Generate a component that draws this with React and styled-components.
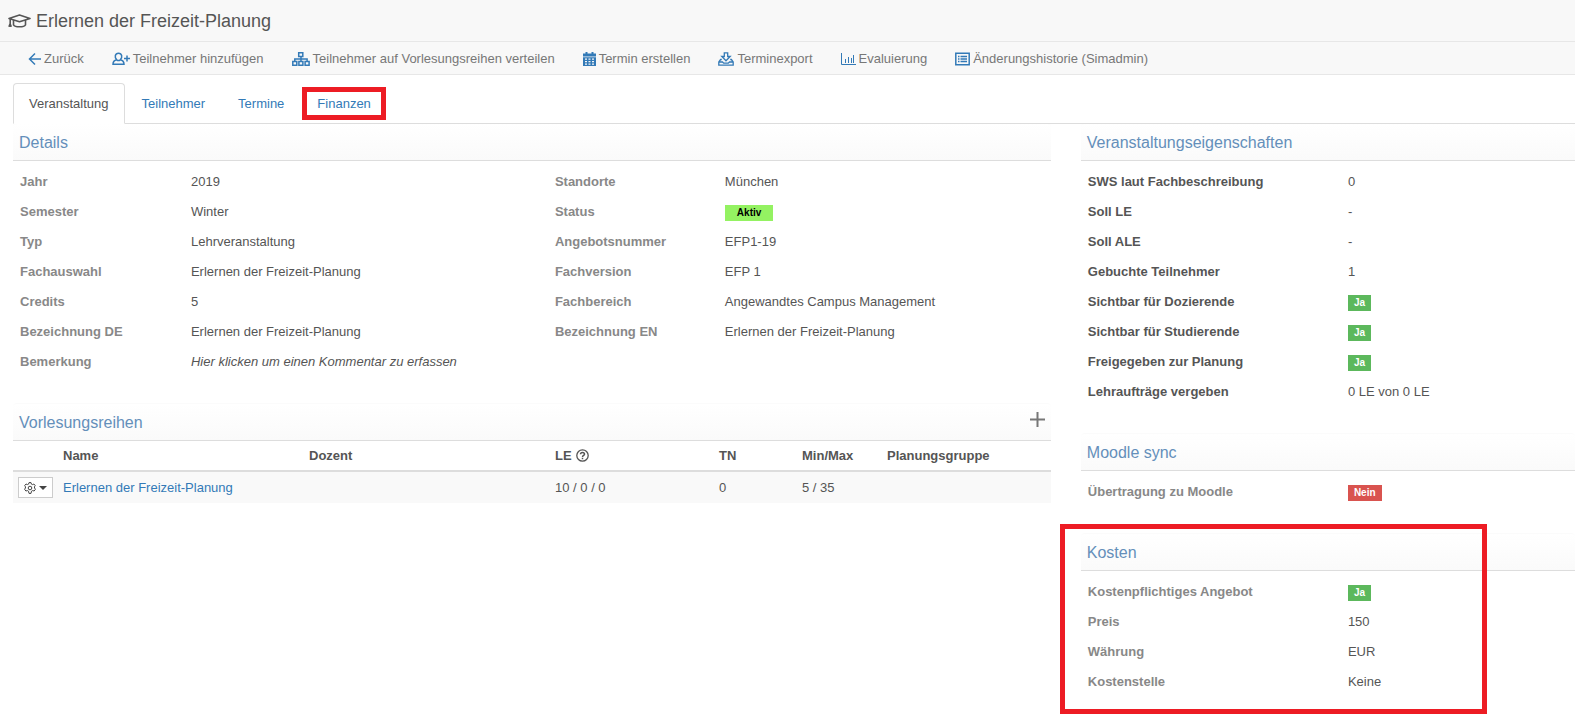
import React from "react";
import styled, { createGlobalStyle } from "styled-components";

const GlobalStyle = createGlobalStyle`
  * {
    box-sizing: border-box;
  }

  body {
    margin: 0;
    background: #fff;
    color: #555;
    font-family: "Liberation Sans", Arial, Helvetica, sans-serif;
    font-size: 13px;
    line-height: 20px;
  }

  a {
    color: #337ab7;
    text-decoration: none;
  }
`;

const Header = styled.header`
  display: flex;
  align-items: center;
  gap: 5px;
  height: 42px;
  padding: 0 8px;
  background: #f8f8f8;
  border-bottom: 1px solid #e7e7e7;
`;

const Title = styled.h1`
  margin: 0;
  font-size: 18px;
  font-weight: 400;
`;

const Toolbar = styled.nav`
  display: flex;
  height: 33px;
  padding: 0 14px;
  background: #f8f8f8;
  border-bottom: 1px solid #e7e7e7;
`;

const ToolbarButton = styled.button`
  display: flex;
  align-items: center;
  gap: 3px;
  padding: 1px 14px 0;
  border: 0;
  background: none;
  color: #777;
  font: inherit;
  white-space: nowrap;
  cursor: pointer;

  svg {
    color: #337ab7;
  }
`;

const Icon = styled.svg`
  display: block;
  flex: none;
  fill: none;
  stroke: currentColor;
  stroke-width: 1.5;
`;

const Tabs = styled.nav`
  position: relative;
  z-index: 1;
  display: flex;
  gap: 1px;
  height: 41px;
  margin: 8px 0 -1px 13px;
  border-bottom: 1px solid #ddd;
`;

const Tab = styled.a`
  position: relative;
  height: 41px;
  padding: 10px 15px;
  border: 1px solid ${(props) => (props.$active ? "#ddd" : "transparent")};
  border-bottom-color: ${(props) => (props.$active ? "#fff" : "transparent")};
  border-radius: 4px 4px 0 0;
  color: ${(props) => (props.$active ? "#555" : "#337ab7")};
`;

const TabMarker = styled.span`
  position: absolute;
  inset: 3px 0;
  border: 5px solid #ed1c24;
  pointer-events: none;
`;

const Content = styled.main`
  display: grid;
  grid-template-columns: 21fr 10fr;
  gap: 30px;
  padding: 0 0 26px 13px;
`;

const Column = styled.div`
  display: flex;
  flex-direction: column;
  gap: 26px;
  min-width: 0;
`;

const Panel = styled.section`
  position: relative;
`;

const PanelHeader = styled.div`
  display: flex;
  align-items: center;
  justify-content: space-between;
  height: 38px;
  padding: 2px 6px 0;
  background: linear-gradient(#fff, #fafafa);
  border: 1px solid #fbfbfb;
  border-bottom-color: #ddd;
  border-width: 1px 0;
  border-radius: 4px 4px 0 0;
`;

const PanelTitle = styled.h2`
  margin: 0;
  color: #648fba;
  font-size: 16px;
  font-weight: 400;
`;

const AddButton = styled.button`
  padding: 0 0 8px;
  border: 0;
  background: none;
  color: #777;
  cursor: pointer;
`;

const PanelMarker = styled.span`
  position: absolute;
  inset: -9px auto -17px -21px;
  width: 427px;
  border: 5px solid #ed1c24;
  pointer-events: none;
`;

const Fields = styled.dl`
  display: grid;
  grid-template-columns: ${(props) => props.$columns};
  margin: 0;
  padding: 6px 0 0 7px;
  line-height: 30px;
`;

const FieldLabel = styled.dt`
  color: ${(props) => (props.$dark ? "#555" : "#888")};
  font-weight: 700;
`;

const FieldValue = styled.dd`
  margin: 0;
  font-style: ${(props) => (props.$hint ? "italic" : "normal")};
`;

const Badge = styled.span`
  display: inline-block;
  padding: 0 ${(props) => (props.$color === "active" ? 12 : 6)}px;
  background: ${(props) =>
    ({ active: "#94f262", success: "#5cb85c", danger: "#d9534f" })[
      props.$color
    ]};
  color: ${(props) => (props.$color === "active" ? "#000" : "#fff")};
  font-size: 10px;
  font-weight: 700;
  line-height: 16px;
`;

const Table = styled.table`
  width: 100%;
  table-layout: fixed;
  border-collapse: separate;
  border-spacing: 0;
  text-align: left;
`;

const HeadCell = styled.th`
  width: ${(props) => props.$width}px;
  height: 31px;
  padding: 0 5px;
  border-bottom: 2px solid #ddd;
  font-weight: 700;
`;

const HelpLabel = styled.span`
  display: flex;
  align-items: center;
  gap: 4px;
`;

const Cell = styled.td`
  height: 31px;
  padding: 0 5px;
  background: #f9f9f9;
`;

const MenuButton = styled.button`
  display: flex;
  align-items: center;
  gap: 3px;
  width: 35px;
  height: 21px;
  padding: 0 5px;
  border: 1px solid #ccc;
  background: #fff;
  color: #444;
  cursor: pointer;
`;

const CapIcon = () => (
  <Icon width="23" height="14" viewBox="0 0 23 14">
    <path
      strokeWidth="1.6"
      strokeLinejoin="round"
      d="M1 4.400 11.500 1 22 4.400 11.500 7.800zM5.500 6.200v4.600c1.500 2.600 10.500 2.600 12 0V6.200M2.200 5v8M.9 12.800l1.200-3 1.200 3"
    />
  </Icon>
);

const BackIcon = () => (
  <Icon width="13" height="14" viewBox="0 0 13 14">
    <path d="M7 1.5 1.5 7 7 12.5M1.5 7H13" />
  </Icon>
);

const UserPlusIcon = () => (
  <Icon width="18" height="14" viewBox="0 0 18 14">
    <path d="M4.7 7.8C2.2 5.2 3 1.2 6.5 1.2s4.3 4 1.8 6.6c2.3.6 3.7 1.7 3.7 4.5H1c0-2.8 1.4-3.9 3.700-4.500zM4.700 7.800c1.100.9 2.500.9 3.600 0M12 6.500h6M15 3.500v6" />
  </Icon>
);

const TreeIcon = () => (
  <Icon width="18" height="14" viewBox="0 0 18 14">
    <path d="M6.700.8h4.100v3.700H6.700zM.8 9.500h4v3.700h-4zM6.900 9.500h4v3.700h-4zM13.100 9.500h4v3.700h-4zM9 4.500v5M2.800 9.500V7h12.300v2.500" />
  </Icon>
);

const CalendarIcon = () => (
  <Icon width="13" height="14" viewBox="0 0 13 14">
    <path
      fill="currentColor"
      stroke="none"
      fillRule="evenodd"
      d="M2.500 0h2v1.500h4V0h2v1.500H13V4.500H0V1.500h2.500zM0 5.200h13V14H0zM2 6.500v1.300h2V6.500zm3.500 0v1.300h2V6.500zm3.500 0v1.300h2V6.500zM2 9v1.300h2V9zm3.500 0v1.300h2V9zM9 9v1.300h2V9zM2 11.500v1.200h2v-1.200zm3.500 0v1.200h2v-1.200zm3.500 0v1.200h2v-1.200z"
    />
  </Icon>
);

const ExportIcon = () => (
  <Icon width="16" height="14" viewBox="0 0 16 14">
    <path
      strokeWidth="1.300"
      d="M6.300.8h3.400v3.700h2.500L8 8.800 3.800 4.500h2.500zM3.800 7.500H2.600L.8 10v3.200h14.400V10l-1.800-2.500h-1.200M.8 10h3.700l1.200 1.200h4.600L11.500 10h3.700"
    />
  </Icon>
);

const ChartIcon = () => (
  <Icon width="15" height="14" viewBox="0 0 15 14">
    <path
      strokeWidth="1"
      d="M.5 1v11.500H15M4.500 7v4M7.500 5v6M10.500 6v5M12.500 3v8"
    />
  </Icon>
);

const HistoryIcon = () => (
  <Icon width="15" height="14" viewBox="0 0 15 14">
    <path d="M.8 1.300h13.400v11.400H.8zM3 4.500h1.500M5.500 4.500H12M3 7h1.500M5.500 7H12M3 9.500h1.500M5.500 9.500H12" />
  </Icon>
);

const PlusIcon = () => (
  <Icon width="15" height="15" viewBox="0 0 15 15">
    <path strokeWidth="2" d="M7.500 0v15M0 7.500h15" />
  </Icon>
);

const HelpIcon = () => (
  <Icon width="13" height="13" viewBox="0 0 13 13">
    <circle cx="6.500" cy="6.500" r="5.700" strokeWidth="1.300" />
    <path d="M4.500 5.200c0-2.400 4-2.400 4 0 0 1.200-2 1.300-2 2.700M6.500 8.800v1.400" />
  </Icon>
);

const GearIcon = () => (
  <Icon width="12" height="12" viewBox="0 0 12 12">
    <path
      strokeWidth="1"
      d="M5 .6h2l.4 1.500 1 .5 1.500-.6 1.300 1.600-.8 1.300.2 1.100.8 1.300L10.100 9l-1.600-.4-1 .6L7 11.400H5l-.5-2.200-1-.6L1.900 9 .6 7.300 1.400 6l.1-1.100-.8-1.300L2 2l1.600.6 1-.5z"
    />
    <circle cx="6" cy="6" r="1.800" strokeWidth="1" />
  </Icon>
);

const CaretIcon = () => (
  <Icon width="8" height="4" viewBox="0 0 8 4">
    <path fill="currentColor" stroke="none" d="M0 0h8L4 4z" />
  </Icon>
);

const actions = [
  { label: "Zurück", icon: <BackIcon /> },
  { label: "Teilnehmer hinzufügen", icon: <UserPlusIcon /> },
  { label: "Teilnehmer auf Vorlesungsreihen verteilen", icon: <TreeIcon /> },
  { label: "Termin erstellen", icon: <CalendarIcon /> },
  { label: "Terminexport", icon: <ExportIcon /> },
  { label: "Evaluierung", icon: <ChartIcon /> },
  { label: "Änderungshistorie (Simadmin)", icon: <HistoryIcon /> },
];

const yes = <Badge $color="success">Ja</Badge>;

const details = [
  ["Jahr", "2019"],
  ["Standorte", "München"],
  ["Semester", "Winter"],
  ["Status", <Badge $color="active">Aktiv</Badge>],
  ["Typ", "Lehrveranstaltung"],
  ["Angebotsnummer", "EFP1-19"],
  ["Fachauswahl", "Erlernen der Freizeit-Planung"],
  ["Fachversion", "EFP 1"],
  ["Credits", "5"],
  ["Fachbereich", "Angewandtes Campus Management"],
  ["Bezeichnung DE", "Erlernen der Freizeit-Planung"],
  ["Bezeichnung EN", "Erlernen der Freizeit-Planung"],
  ["Bemerkung", "Hier klicken um einen Kommentar zu erfassen", true],
];

const properties = [
  ["SWS laut Fachbeschreibung", "0"],
  ["Soll LE", "-"],
  ["Soll ALE", "-"],
  ["Gebuchte Teilnehmer", "1"],
  ["Sichtbar für Dozierende", yes],
  ["Sichtbar für Studierende", yes],
  ["Freigegeben zur Planung", yes],
  ["Lehraufträge vergeben", "0 LE von 0 LE"],
];

const moodle = [["Übertragung zu Moodle", <Badge $color="danger">Nein</Badge>]];

const costs = [
  ["Kostenpflichtiges Angebot", yes],
  ["Preis", "150"],
  ["Währung", "EUR"],
  ["Kostenstelle", "Keine"],
];

const FieldList = ({ items, columns = "260fr 227fr", dark }) => (
  <Fields $columns={columns}>
    {items.map(([label, value, hint]) => (
      <React.Fragment key={label}>
        <FieldLabel $dark={dark}>{label}</FieldLabel>
        <FieldValue $hint={hint}>{value}</FieldValue>
      </React.Fragment>
    ))}
  </Fields>
);

const InfoPanel = ({ title, action, marked, children }) => (
  <Panel>
    <PanelHeader>
      <PanelTitle>{title}</PanelTitle>
      {action}
    </PanelHeader>
    {children}
    {marked && <PanelMarker />}
  </Panel>
);

const LectureTable = () => (
  <Table>
    <thead>
      <tr>
        <HeadCell $width={45} />
        <HeadCell $width={246}>Name</HeadCell>
        <HeadCell $width={246}>Dozent</HeadCell>
        <HeadCell $width={164}>
          <HelpLabel>
            LE <HelpIcon />
          </HelpLabel>
        </HeadCell>
        <HeadCell $width={83}>TN</HeadCell>
        <HeadCell $width={85}>Min/Max</HeadCell>
        <HeadCell $width={169}>Planungsgruppe</HeadCell>
      </tr>
    </thead>
    <tbody>
      <tr>
        <Cell>
          <MenuButton type="button" aria-label="Aktionen">
            <GearIcon />
            <CaretIcon />
          </MenuButton>
        </Cell>
        <Cell>
          <a href="#reihe">Erlernen der Freizeit-Planung</a>
        </Cell>
        <Cell />
        <Cell>10 / 0 / 0</Cell>
        <Cell>0</Cell>
        <Cell>5 / 35</Cell>
        <Cell />
      </tr>
    </tbody>
  </Table>
);

const App = () => {
  return (
    <>
      <GlobalStyle />
      <Header>
        <CapIcon />
        <Title>Erlernen der Freizeit-Planung</Title>
      </Header>
      <Toolbar>
        {actions.map((action) => (
          <ToolbarButton key={action.label} type="button">
            {action.icon}
            {action.label}
          </ToolbarButton>
        ))}
      </Toolbar>
      <Tabs>
        <Tab href="#veranstaltung" $active>
          Veranstaltung
        </Tab>
        <Tab href="#teilnehmer">Teilnehmer</Tab>
        <Tab href="#termine">Termine</Tab>
        <Tab href="#finanzen">
          Finanzen
          <TabMarker />
        </Tab>
      </Tabs>
      <Content>
        <Column>
          <InfoPanel title="Details">
            <FieldList items={details} columns="171fr 364fr 170fr 326fr" />
          </InfoPanel>
          <InfoPanel
            title="Vorlesungsreihen"
            action={
              <AddButton type="button" aria-label="Vorlesungsreihe hinzufügen">
                <PlusIcon />
              </AddButton>
            }
          >
            <LectureTable />
          </InfoPanel>
        </Column>
        <Column>
          <InfoPanel title="Veranstaltungseigenschaften">
            <FieldList items={properties} dark />
          </InfoPanel>
          <InfoPanel title="Moodle sync">
            <FieldList items={moodle} />
          </InfoPanel>
          <InfoPanel title="Kosten" marked>
            <FieldList items={costs} />
          </InfoPanel>
        </Column>
      </Content>
    </>
  );
};

export default App;
